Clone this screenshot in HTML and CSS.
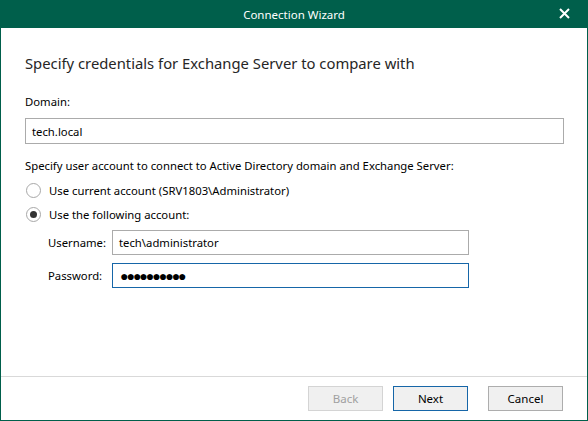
FILE: index.html
```html
<!DOCTYPE html>
<html>
<head>
  <meta charset="UTF-8">
  <title>Connection Wizard</title>
  <link rel="stylesheet" href="styles.css">
</head>
<body>
  <div class="window">
    <div class="titlebar">
      <span class="titlebar-text">Connection Wizard</span>
      <span class="close-btn">
        <svg width="11" height="11" viewBox="0 0 11 11">
          <path d="M1 1 L10 10 M10 1 L1 10" stroke="#fff" stroke-width="2"/>
        </svg>
      </span>
    </div>

    <div class="content">
      <div class="heading">Specify credentials for Exchange Server to compare with</div>

      <div class="field-label">Domain:</div>
      <div class="textbox domain">tech.local</div>

      <div class="section-label">Specify user account to connect to Active Directory domain and Exchange Server:</div>

      <div class="radio-row">
        <span class="radio"></span>
        <span>Use current account (SRV1803\Administrator)</span>
      </div>
      <div class="radio-row">
        <span class="radio checked"></span>
        <span>Use the following account:</span>
      </div>

      <div class="account-grid">
        <span class="grid-label">Username:</span>
        <div class="textbox">tech\administrator</div>
        <span class="grid-label">Password:</span>
        <div class="textbox focused password">&#9679;&#9679;&#9679;&#9679;&#9679;&#9679;&#9679;&#9679;&#9679;&#9679;</div>
      </div>
    </div>

    <div class="footer">
      <button class="btn disabled">Back</button>
      <button class="btn default">Next</button>
      <button class="btn cancel">Cancel</button>
    </div>
  </div>
</body>
</html>
```

FILE: styles.css
```css
body {
  margin: 0;
  font-family: "Noto Sans", "Open Sans", sans-serif;
  font-size: 11.3px;
  color: #000;
  background: #fff;
}
.window {
  width: 588px;
  height: 421px;
  box-sizing: border-box;
  border: 1px solid #005f4b;
  border-top: none;
  display: flex;
  flex-direction: column;
}
.titlebar {
  height: 28px;
  background-color: #005f4b;
  color: #fff;
  display: flex;
  align-items: center;
  justify-content: center;
  position: relative;
  margin: 0 -1px;
}
.titlebar-text {
  font-size: 11.5px;
}
.close-btn {
  position: absolute;
  right: 18px;
  top: 8px;
  display: flex;
}
.content {
  flex: 1;
  padding: 25px 23px 0 24px;
  display: flex;
  flex-direction: column;
}
.heading {
  font-size: 14.8px;
  color: #262626;
  line-height: 20px;
  margin-bottom: 21px;
}
.field-label {
  line-height: 16px;
  margin-bottom: 8px;
}
.textbox {
  border: 1px solid #ababab;
  height: 25px;
  box-sizing: border-box;
  padding: 0 6px;
  display: flex;
  align-items: center;
  background: #fff;
}
.textbox.domain {
  width: 539px;
  height: 26px;
}
.textbox.focused {
  border-color: #1666a8;
}
.textbox.password {
  font-size: 14px;
  letter-spacing: -2px;
  padding-left: 7px;
}
.section-label {
  margin-top: 14px;
  line-height: 16px;
  margin-bottom: 4px;
}
.radio-row {
  display: flex;
  align-items: center;
  gap: 8px;
  height: 24px;
  padding-left: 1px;
}
.radio {
  width: 15px;
  height: 15px;
  box-sizing: border-box;
  border: 1px solid #a8a8a8;
  border-radius: 50%;
  display: inline-flex;
  align-items: center;
  justify-content: center;
}
.radio.checked::after {
  content: "";
  width: 7px;
  height: 7px;
  border-radius: 50%;
  background: #333;
}
.account-grid {
  display: grid;
  grid-template-columns: 64px 357px;
  row-gap: 8px;
  align-items: center;
  padding-left: 23px;
  margin-top: 4px;
}
.footer {
  height: 43px;
  border-top: 1px solid #d9d9d9;
  display: flex;
  justify-content: flex-end;
  align-items: center;
  gap: 10px;
  padding-right: 24px;
}
.btn {
  width: 75px;
  height: 25px;
  font-family: "Noto Sans", "Open Sans", sans-serif;
  font-size: 11.5px;
  background: #f0f0f0;
  border: 1px solid #adadad;
  color: #000;
  padding: 0;
}
.btn.disabled {
  color: #a0a0a0;
  border-color: #d4d4d4;
}
.btn.default {
  border-color: #1666a8;
}
.btn.cancel {
  margin-left: 10px;
}
```
